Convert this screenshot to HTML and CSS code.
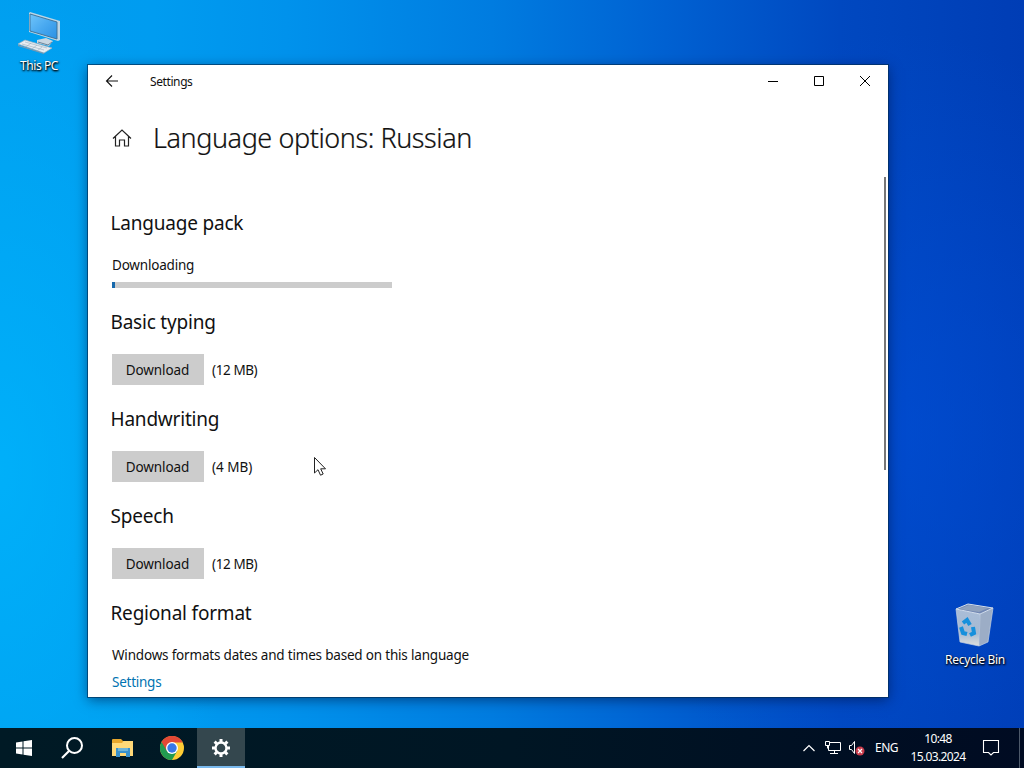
FILE: index.html
```html
<!DOCTYPE html>
<html lang="en">
<head>
<meta charset="utf-8">
<title>Settings</title>
<link rel="stylesheet" href="styles.css">
</head>
<body>
<div class="desktop">
  <div class="shortcut pc">
    <svg width="48" height="48" viewBox="0 0 48 48">
      <defs><linearGradient id="screen" x1="0" y1="0" x2="1" y2="1"><stop offset="0" stop-color="#70c5fa"/><stop offset=".5" stop-color="#49a9f0"/><stop offset="1" stop-color="#2b91e4"/></linearGradient></defs>
      <path d="M22 32l9-2 7 3-4 5-12-3z" fill="#c9d7e2"/>
      <path d="M23 34l10 3 4-3" fill="none" stroke="#6c8498"/>
      <path d="M14 5l1-1 30 9v19l-2 1-29-9z" fill="#bcd6e6"/>
      <path d="M15 6l27 8v17L15 23z" fill="url(#screen)" stroke="#3b6d92" stroke-width=".9"/>
      <path d="M3 36l7-4 27 8-8 5z" fill="#e7edf2" stroke="#9eb0bf" stroke-width=".7"/>
      <path d="M7 36l22 6m-19-8l22 6M11 39l5-4m1 6l5-4m0 6l5-4" stroke="#9caebe" stroke-width=".6"/>
      <path d="M3 37l26 8v1L3 38z" fill="#8098ab"/>
    </svg>
    <span class="label label-pc">This PC</span>
  </div>

  <div class="shortcut bin">
    <svg width="48" height="48" viewBox="0 0 48 48">
      <defs><linearGradient id="glass" x1="0" y1="0" x2="0" y2="1"><stop offset="0" stop-color="#a9bdd8"/><stop offset=".65" stop-color="#a6bad2"/><stop offset="1" stop-color="#dedfdd"/></linearGradient></defs>
      <path d="M5 9l24 5-1 32-19-4z" fill="url(#glass)"/>
      <path d="M29 14l13-6-5 34-9 4z" fill="#9cadc6"/>
      <path d="M5 9L17 4l25 4-13 6z" fill="#7288b4" stroke="#d5dfeb"/>
      <path d="M8 9l10-4 19 3-9 4z" fill="#90a2bd"/>
      <path d="M5 9l4 33 19 4 9-4 5-34M29 14l-1 32" fill="none" stroke="#c4d1e1" stroke-width=".7"/>
      <g fill="none" stroke="#1690dc" stroke-width="4"><path d="M12 23l4-3 3 5"/><path d="M10 27l2 6 4 1"/><path d="M19 35l4-2-1-6"/></g>
    </svg>
    <span class="label label-bin">Recycle Bin</span>
  </div>

  <main class="window">
    <header class="titlebar">
      <svg class="back" width="14" height="14" viewBox="0 0 14 14"><path d="M13 7H1.500M7 1.500L1.500 7 7 12.500" fill="none" stroke="#111" stroke-width="1.1"/></svg>
      <span class="app-name">Settings</span>
      <div class="controls">
        <svg width="46" height="32"><path d="M18 16.500h10" stroke="#000"/></svg>
        <svg width="46" height="32"><path d="M18.500 11.500h9v9h-9z" fill="none" stroke="#000"/></svg>
        <svg width="46" height="32"><path d="M18 11l10 10M28 11L18 21" stroke="#000" stroke-width="1"/></svg>
      </div>
    </header>
    <div class="page-head">
      <svg width="20" height="20" viewBox="0 0 20 20"><path d="M1 10.500l9-8.500 9 8.500M3.500 8.500v9.500h4v-6h5v6h4V8.500" fill="none" stroke="#222" stroke-width="1.2"/></svg>
      <h1>Language options: Russian</h1>
    </div>
    <div class="content">
      <section class="pack"><h2>Language pack</h2><p class="status">Downloading</p><div class="progress"><i></i></div></section>
      <section class="feature"><h2>Basic typing</h2><div class="row"><button>Download</button><span class="size">(12 MB)</span></div></section>
      <section class="feature"><h2>Handwriting</h2><div class="row"><button>Download</button><span class="size size-small">(4 MB)</span></div></section>
      <section class="feature"><h2>Speech</h2><div class="row"><button>Download</button><span class="size">(12 MB)</span></div></section>
      <section class="region"><h2>Regional format</h2><p class="note">Windows formats dates and times based on this language</p><a>Settings</a></section>
    </div>
    <div class="scrollbar"></div>
  </main>

  <svg class="cursor" width="14" height="22" viewBox="0 0 14 22"><path d="M1.500 1.500v15.500l3.500-3.300 2.500 5.500 2.700-1.200-2.500-5.200h4.800z" fill="#fff" stroke="#222"/></svg>

  <footer class="taskbar">
    <div class="apps">
      <span class="task"><svg width="18" height="18" viewBox="0 0 18 18"><path d="M1 3.500l6.500-1v6H1zM8.500 2.300L17 1v7.500H8.500zM1 9.500h6.500v6L1 14.600zM8.500 9.500H17V17l-8.500-1.300z" fill="#fff"/></svg></span>
      <span class="task search"><svg width="24" height="24" viewBox="0 0 24 24"><circle cx="14.500" cy="9.500" r="7.500" fill="none" stroke="#fff" stroke-width="2"/><path d="M9 15L2 22" stroke="#fff" stroke-width="2.200"/></svg></span>
      <span class="task"><svg width="22" height="20" viewBox="0 0 22 20"><path d="M0 2q0-1 1-1h8l2 2h10v15H0z" fill="#e7a72d"/><path d="M0 5h10l1.500-2H21v15H0z" fill="#ffd978"/><path d="M4 19v-9h14v9h-4v-4H8v4z" fill="#3991cc"/><path d="M6 10h10v3H6z" fill="#6eb4d8"/></svg></span>
      <span class="task"><svg width="24" height="24" viewBox="0 0 24 24"><circle cx="12" cy="12" r="12" fill="#ffcd35"/><path d="M12 12L1.600 6A12 12 0 0 0 12 24l5.200-9z" fill="#229b50"/><path d="M12 6.500h10.700A12 12 0 0 0 1.600 6l5.600 9.500L12 12z" fill="#e34835"/><circle cx="12" cy="12" r="6" fill="#fff"/><circle cx="12" cy="12" r="4.700" fill="#3978e6"/></svg></span>
      <span class="task active"><svg width="20" height="20" viewBox="0 0 20 20"><circle cx="10" cy="10" r="5.500" fill="none" stroke="#fff" stroke-width="2.400"/><g stroke="#fff" stroke-width="3"><path d="M10 1v3M10 16v3M1 10h3M16 10h3M3.600 3.600l2.200 2.200M14.200 14.200l2.200 2.200M16.400 3.600l-2.200 2.200M5.800 14.200l-2.200 2.200"/></g></svg></span>
    </div>
    <div class="tray">
      <svg class="chevron" width="14" height="10" viewBox="0 0 14 10"><path d="M1.500 8L7 2.500 12.500 8" fill="none" stroke="#fff" stroke-width="1.200"/></svg>
      <svg class="network" width="18" height="16" viewBox="0 0 18 16"><path d="M5.500 2.500h11v8H4.500V6M10.500 10.500v3M6 13.500h8M1.500 1.500h4v4h-4zM3.500 5.500v3" fill="none" stroke="#fff"/></svg>
      <svg class="volume" width="18" height="16" viewBox="0 0 18 16"><path d="M1.500 5.500h2l3-4v12l-3-4h-2z" fill="none" stroke="#fff"/><circle cx="12" cy="11" r="4.500" fill="#c83c4c"/><path d="M10 9l4 4m0-4l-4 4" stroke="#fff" stroke-width="1.200"/></svg>
      <span class="lang">ENG</span>
      <div class="clock"><span class="time">10:48</span><span class="date">15.03.2024</span></div>
      <svg class="notice" width="18" height="18" viewBox="0 0 18 18"><path d="M1.500 1.500h15v12h-5L9 16l-2.500-2.500h-5z" fill="none" stroke="#fff" stroke-width="1.100"/></svg>
    </div>
  </footer>
</div>
</body>
</html>
```
FILE: styles.css
```css
* { box-sizing: border-box; }
body { margin: 0; overflow: hidden; font: 13.5px/20px "Noto Sans", "Open Sans", sans-serif; color: #111; }
svg { display: block; flex: none; }
h1, h2, p { margin: 0; font-weight: 400; white-space: nowrap; }
.desktop {
  position: relative; width: 1024px; height: 768px; overflow: hidden;
  background:
    radial-gradient(ellipse 250px 500px at 0 470px, rgba(0,185,255,.65), transparent),
    radial-gradient(ellipse 300px 400px at 900px 430px, rgba(0,80,220,.55), transparent),
    linear-gradient(90deg, #009eef 0%, #009cf0 15%, #0092ec 28%, #007ce0 48%, #0061d2 65%, #0048c0 82%, #003db5 100%);
}
.shortcut { position: absolute; display: flex; flex-direction: column; align-items: center; width: 76px; }
.pc { left: 1px; top: 8px; }
.bin { left: 937px; top: 600px; }
.label { color: #fff; font-size: 12px; line-height: 20px; white-space: nowrap; text-shadow: 1px 1px 2px #000, 0 1px 2px #000; }
.label-pc { letter-spacing: -.4px; }
.label-bin { letter-spacing: -.3px; margin-top: 2px; }
.window { position: absolute; left: 88px; top: 65px; width: 800px; height: 632px; overflow: hidden; background: #fff; box-shadow: 0 0 0 1px rgba(0,45,85,.65), 0 3px 12px rgba(0,15,55,.55); }
.titlebar { display: flex; height: 32px; align-items: center; padding-left: 17px; }
.app-name { margin: 2px 0 0 31px; font-size: 12px; letter-spacing: -.4px; }
.controls { display: flex; margin-left: auto; }
.page-head { display: flex; align-items: center; height: 81px; padding-left: 24px; }
h1 { margin-left: 21px; font-size: 27px; line-height: 40px; font-weight: 300; letter-spacing: -.43px; -webkit-text-stroke: .2px #111; }
.content { padding: 30px 0 0 22px; }
h2 { height: 32px; padding-left: .5px; line-height: 30px; font-size: 19px; letter-spacing: -.2px; }
.pack { height: 99px; }
.status { margin: 15px 0 0 2px; height: 20px; line-height: 20px; letter-spacing: -.2px; }
.progress { width: 280px; height: 6px; margin: 7px 0 0 2px; background: #ccc; }
.progress i { display: block; width: 3px; height: 6px; background: #1769ac; }
.feature { height: 97px; }
.row { display: flex; align-items: center; padding: 15px 0 0 2px; }
button { width: 92px; height: 31px; padding: 1px 1px 0 0; border: 0; background: #ccc; color: #111; font: inherit; line-height: 30px; letter-spacing: -.1px; }
.size { margin-left: 8px; letter-spacing: -.4px; }
.size-small { letter-spacing: 0; }
.region { height: 105px; }
.note { margin: 15px 0 0 2px; letter-spacing: -.19px; }
a { display: block; margin: 7px 0 0 2px; color: #0073b1; letter-spacing: -.25px; }
.scrollbar { position: absolute; right: 2px; top: 112px; width: 2px; height: 293px; background: #777; }
.cursor { position: absolute; left: 313px; top: 456px; }
.taskbar { position: absolute; left: 0; bottom: 0; width: 1024px; height: 40px; display: flex; justify-content: space-between; color: #fff; background: linear-gradient(90deg, #001a25, #001624 50%, #000b22); }
.apps { display: flex; }
.task { display: flex; align-items: center; justify-content: center; width: 49px; height: 40px; padding-right: 1px; }
.search { padding-right: 3px; }
.task:nth-child(3) { width: 50px; padding-right: 0; }
.task:nth-child(4) { padding-right: 2px; }
.task.active { width: 48px; padding: 1px 0 0; background: #34474e; border-bottom: 2px solid #79b9ed; }
.tray { display: flex; align-items: center; width: 222px; font-size: 12px; }
.network { margin-left: 8px; }
.volume { margin-left: 6px; }
.lang { width: 24px; margin-left: 9px; letter-spacing: -.5px; }
.clock { width: 56px; margin-left: 11px; text-align: center; line-height: 18px; white-space: nowrap; }
.clock span { display: block; }
.time, .date { letter-spacing: -.63px; }
.notice { margin-left: 16px; }
.tray::after { content: ""; width: 1px; height: 40px; margin-left: 19px; background: #4d596a; }
```
